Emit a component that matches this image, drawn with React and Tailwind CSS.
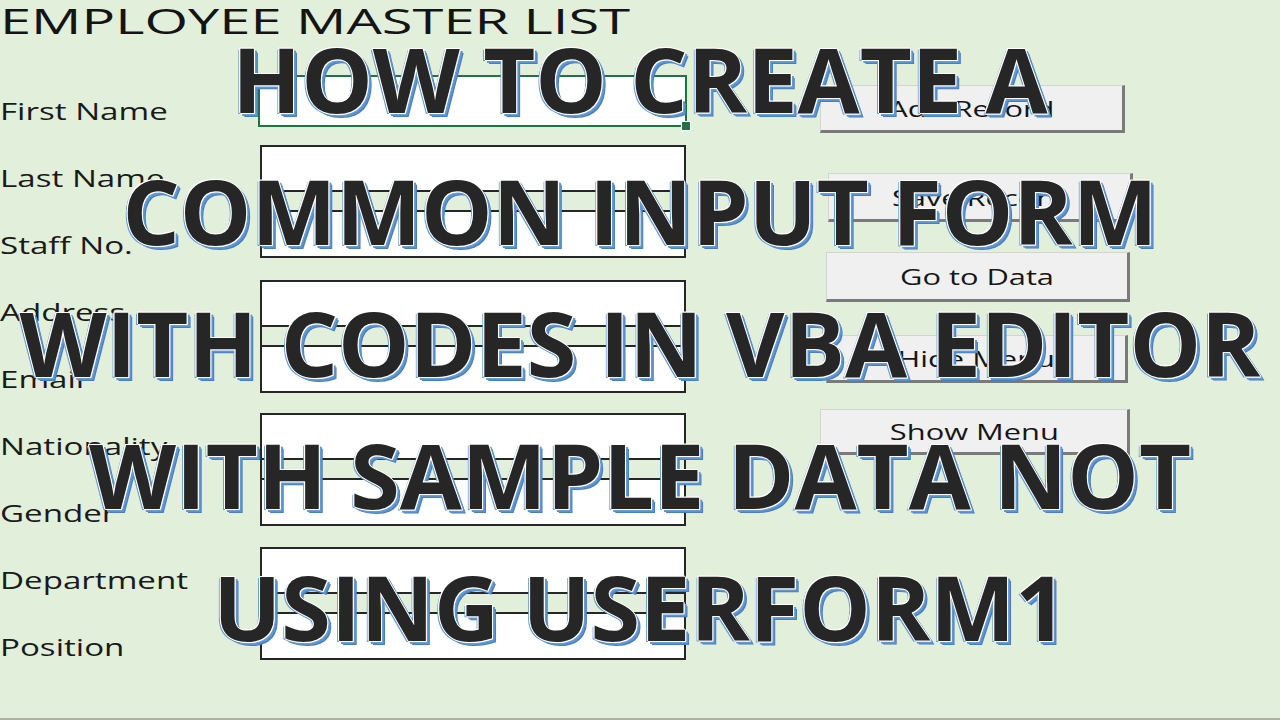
import React from "react";

const labels = [
  "First Name",
  "Last Name",
  "Staff No.",
  "Address",
  "Email",
  "Nationality",
  "Gender",
  "Department",
  "Position",
];

function PairBox({ mt }) {
  return (
    <div className={`ml-[2px] w-[426px] h-[113px] border-2 border-[#262626] flex flex-col ${mt}`}>
      <div className="h-[43px] bg-white" />
      <div className="h-[22px] border-y-2 border-[#262626] bg-[#e2efda]" />
      <div className="flex-1 bg-white" />
    </div>
  );
}

function Btn({ label, cls }) {
  return (
    <div
      className={`flex items-center justify-center bg-[#f0f0f0] border-t border-l border-[#d4d4d4] border-r-[3px] border-b-[3px] border-r-[#7a7a7a] border-b-[#7a7a7a] ${cls}`}
    >
      <span className="inline-block scale-x-[1.4] text-[22px] leading-none text-[#161616] font-medium">
        {label}
      </span>
    </div>
  );
}

const lines = [
  "HOW TO CREATE A",
  "COMMON INPUT FORM",
  "WITH CODES IN VBA EDITOR",
  "WITH SAMPLE DATA NOT",
  "USING USERFORM1",
];

export default function App() {
  return (
    <div className="relative w-[1280px] h-[720px] overflow-hidden bg-[#e2efda] flex flex-col font-['Open_Sans',sans-serif]">
      {/* Title */}
      <div className="h-[44px] pt-[2px]">
        <span className="inline-block origin-left scale-x-[1.6] text-[35px] leading-[38px] text-[#141414] whitespace-nowrap">
          EMPLOYEE MASTER LIST
        </span>
      </div>

      {/* Form */}
      <div className="flex">
        {/* Labels */}
        <div className="w-[258px] pt-[33px] flex flex-col">
          {labels.map((l) => (
            <div key={l} className="h-[67px] flex items-center">
              <span className="inline-block origin-left scale-x-[1.38] text-[24px] leading-none font-medium text-[#1a1a1a] whitespace-nowrap">
                {l}
              </span>
            </div>
          ))}
        </div>

        {/* Boxes */}
        <div className="w-[429px] flex flex-col">
          <div className="relative mt-[31px] h-[52px] w-[429px] border-2 border-[#217346] bg-white">
            <div className="absolute -right-[6px] -bottom-[6px] w-[10px] h-[10px] bg-[#217346] border border-white" />
          </div>
          <PairBox mt="mt-[18px]" />
          <PairBox mt="mt-[22px]" />
          <PairBox mt="mt-[20px]" />
          <PairBox mt="mt-[21px]" />
        </div>

        {/* Buttons */}
        <div className="ml-[133px] flex flex-col">
          <Btn label="Add Record" cls="mt-[41px] ml-0 w-[305px] h-[48px]" />
          <Btn label="Save Record" cls="mt-[40px] ml-[8px] w-[305px] h-[49px]" />
          <Btn label="Go to Data" cls="mt-[30px] ml-[6px] w-[304px] h-[50px]" />
          <Btn label="Hide Menu" cls="mt-[33px] ml-[6px] w-[302px] h-[48px]" />
          <Btn label="Show Menu" cls="mt-[26px] ml-0 w-[310px] h-[46px]" />
        </div>
      </div>

      <div className="mt-auto h-[2px] bg-[#a9b3a5]" />

      {/* Overlay headline */}
      <div className="pointer-events-none absolute inset-x-0 top-[12px] text-center font-bold text-[90px] leading-[132px] text-[#262626] [text-shadow:1px_0_0_#fff,-1px_0_0_#fff,0_1px_0_#fff,0_-1px_0_#fff,1px_1px_0_#fff,-1px_-1px_0_#fff,-2px_1px_0_#6a9fd6,2px_2px_0_#6a9fd6,3px_3px_0_#5b93cf,3px_2px_0_#5b93cf,2px_3px_0_#5b93cf,4px_4px_0_#4a7fbf]">
        {lines.map((l) => (
          <div key={l} className="whitespace-nowrap">
            {l}
          </div>
        ))}
      </div>
    </div>
  );
}
